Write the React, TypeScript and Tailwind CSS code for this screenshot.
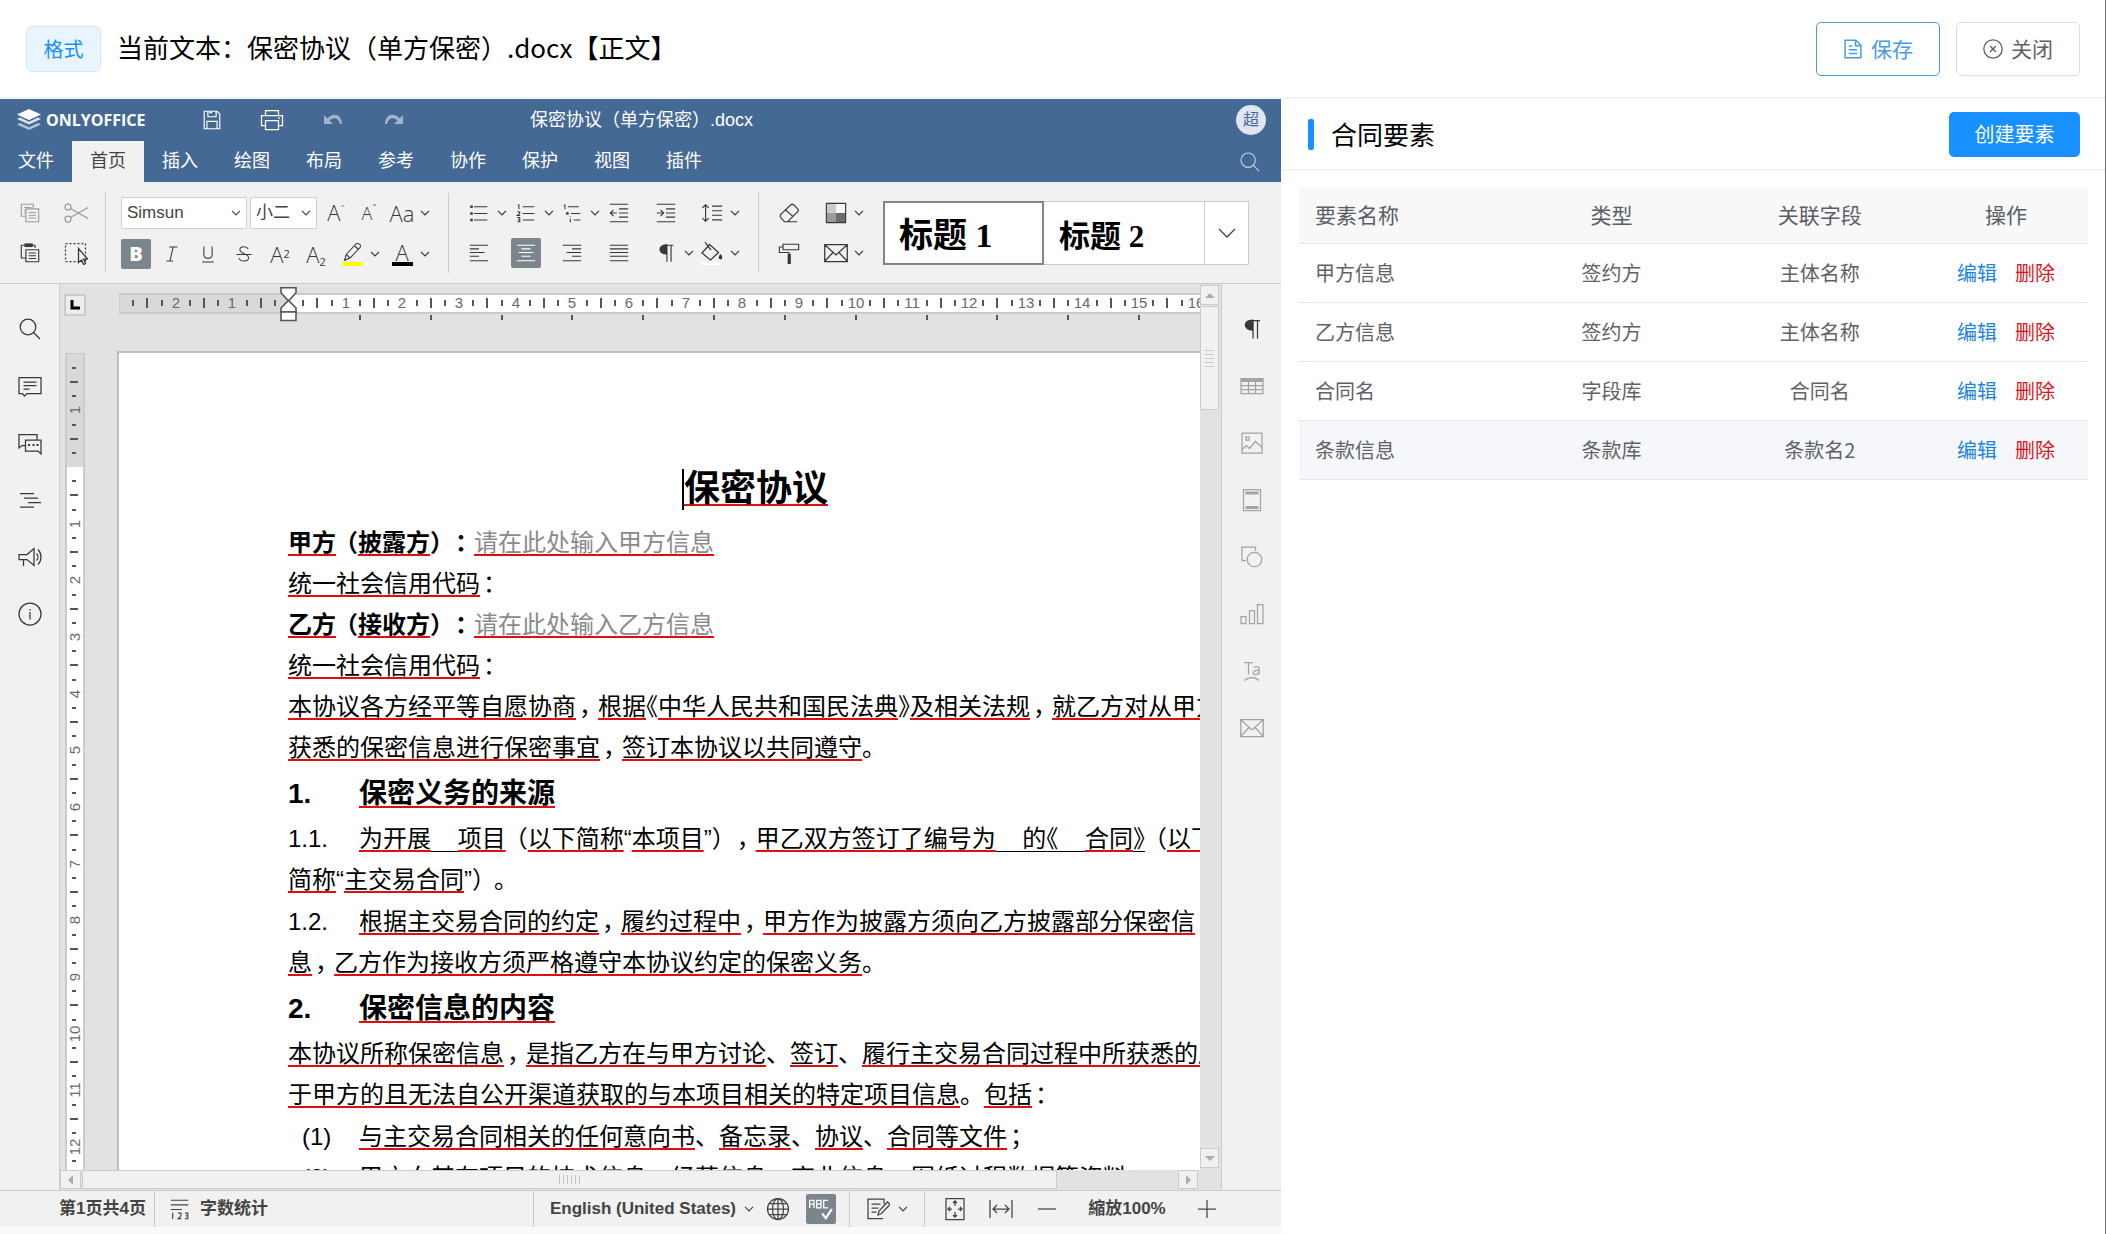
import type { ReactNode } from "react";
import clsx from "clsx";

const CM = 57;
const QUARTER = 85 / 6;

const tabs = ["文件", "首页", "插入", "绘图", "布局", "参考", "协作", "保护", "视图", "插件"];

const elements = [
  { name: "甲方信息", type: "签约方", field: "主体名称" },
  { name: "乙方信息", type: "签约方", field: "主体名称" },
  { name: "合同名", type: "字段库", field: "合同名" },
  { name: "条款信息", type: "条款库", field: "条款名2", active: true },
];

/* ---------- icons ---------- */

function Icon({
  children,
  size = 24,
  className,
}: {
  children: ReactNode;
  size?: number;
  className?: string;
}) {
  return (
    <svg
      viewBox="0 0 24 24"
      width={size}
      height={size}
      fill="none"
      stroke="currentColor"
      strokeWidth="1.25"
      className={clsx("shrink-0", className)}
      aria-hidden="true"
    >
      {children}
    </svg>
  );
}

function Chevron({ className }: { className?: string }) {
  return (
    <svg
      viewBox="0 0 10 6"
      width="10"
      height="6"
      fill="none"
      stroke="currentColor"
      strokeWidth="1.2"
      className={clsx("shrink-0", className)}
      aria-hidden="true"
    >
      <path d="M1 .8 5 5l4-4.200" />
    </svg>
  );
}

const icons = {
  save: <path d="M3.500 2.500h14l3 3v16h-17zM7.500 2.500v6h9v-6M9 4h3M6.500 21.500v-8h11v8" />,
  print: <path d="M5.500 7.500v-5h13v5M5.500 17.500h-4v-10h21v10h-4M5.500 12.500h13v9h-13zM18 10h2" />,
  undo: <path d="M3 7v9h9l-3.500-3.500c4-4 9-3 10.500 3.500h2C20.500 6 12 4 6.500 10.500z" fill="currentColor" stroke="none" />,
  redo: <path d="M21 7v9h-9l3.500-3.500c-4-4-9-3-10.500 3.500H3C3.500 6 12 4 17.500 10.500z" fill="currentColor" stroke="none" />,
  search: (
    <>
      <circle cx="10" cy="10" r="7.800" />
      <path d="m15.500 15.500 6.500 6.500" />
    </>
  ),
  copy: <path d="M7.500 15.500h-5v-13h13v4M5.500 6h8M5.500 9h2M5.500 12h2M7.500 7.500h14v14h-14zM10.500 11.500h8M10.500 14.500h8M10.500 17.500h8" />,
  cut: (
    <>
      <circle cx="4" cy="6" r="3" />
      <circle cx="4" cy="18" r="3" />
      <path d="M6.500 7.500 24 17.500M6.500 16.500 24 6.500" />
    </>
  ),
  paste: (
    <>
      <path d="M7.500 17.500h-5v-14h15v3M7.500 8.500h14v13h-14zM10.500 12h8M10.500 15h8M10.500 18h8" />
      <path d="M6 1.500h9v4H6z" fill="currentColor" stroke="none" />
    </>
  ),
  select: (
    <>
      <path d="M1.500 2.500h20v18h-20z" strokeDasharray="2 2" />
      <path d="M14.500 7.500v14l3-2.500 2 4.500 2-1-2-4.500h4z" fill="#f1f1f1" />
    </>
  ),
  italic: <path d="M8.500 3.500h10M5.500 20.500h8M13.500 3.500l-4 17" />,
  underline: <path d="M7 3v9c0 7 10 7 10 0V3M5 21.500h14" />,
  strike: <path d="M17 6c-2-4-10-3.500-10 1 0 5 10.500 4.500 10.500 9.500 0 5-9.500 5.500-11.500.500M3 12.500h18" />,
  bullets: (
    <>
      <path d="M6 4.500h16M6 12.500h16M6 20.500h16" />
      <path d="M1.500 3h3v3h-3zM1.500 11h3v3h-3zM1.500 19h3v3h-3z" fill="currentColor" stroke="none" />
    </>
  ),
  numbers: <path d="M8 4.500h14M8 12.500h14M8 20.500h14M2 2.500h1.500v5M1.500 10.500h3v2l-3 2.500h3.500M1.500 17.500h3v5h-3M2 20h2.500" />,
  multilevel: (
    <>
      <path d="M7 4.500h13M11 12.500h11M14 20.500h8M2 2.500h1.500v5M10 18.500v4.500M10 15.500v1" />
      <path d="M5 11h3v3H5z" fill="currentColor" stroke="none" />
    </>
  ),
  outdent: <path d="M2 2.500h20M12 7.500h10M12 12h10M12 16.500h10M2 21.500h20M9.500 12H2.500M6 8.500 2.500 12 6 15.500" />,
  indent: <path d="M2 2.500h20M12 7.500h10M12 12h10M12 16.500h10M2 21.500h20M2 12h7M6 8.500 9.500 12 6 15.500" />,
  spacing: <path d="M12 4.500h11M12 9.500h11M12 14.500h11M12 19.500h11M5 3v18M1.500 6.500 5 3l3.500 3.500M1.500 17.500 5 21l3.500-3.500" />,
  left: <path d="M2 3.500h20M2 7.500h10M2 11.500h16M2 15.500h10M2 20.500h20" />,
  center: <path d="M2 3.500h20M7 7.500h10M4 11.500h16M7 15.500h10M2 20.500h20" />,
  right: <path d="M2 3.500h20M12 7.500h10M6 11.500h16M12 15.500h10M2 20.500h20" />,
  justify: <path d="M2 3.500h20M2 7.500h20M2 11.500h20M2 15.500h20M2 20.500h20" />,
  pilcrow: (
    <>
      <path d="M11 3.500h9M13 3.500v18M17.500 3.500v18" />
      <path d="M12.500 3v10C3 13 3 3 12.500 3z" fill="currentColor" />
    </>
  ),
  fill: (
    <>
      <path d="m9.500 3.500 9 8-8 7.500-8.500-7zM5 1l6 8" />
      <path d="M20.500 14c4 5-4 5 0 0z" fill="currentColor" />
      <path d="M1 21h21v4H1z" fill="#fff" stroke="none" />
    </>
  ),
  eraser: <path d="M2.500 14 14 3c1-1 2-1 3 0l4.500 4.500c1 1 1 2 0 3L10.500 21.500H7L2.500 16.500zM8 8.500l8.500 7.500M9 21.500h12" />,
  palette: (
    <>
      <path d="M2 2h10v10H2z" fill="#cbcbcb" stroke="none" />
      <path d="M12 2h10v10H12z" fill="#f6f6f6" stroke="none" />
      <path d="M2 12h10v10H2z" fill="#9a9a9a" stroke="none" />
      <path d="M12 12h10v10H12z" fill="#6c6c6c" stroke="none" />
      <path d="M1.500 1.500h21v21h-21z" />
    </>
  ),
  roller: (
    <>
      <path d="M5.500 2.500h17v6h-17zM5.500 5.500h-4v6h10.500v2" />
      <path d="M10.500 13h3.500v11h-3.500z" fill="currentColor" stroke="none" />
    </>
  ),
  mail: <path d="M.700 3.500h22.600v17H.700zM1 4l11 10L23 4M1 20l8-8.500M23 20l-8-8.500" />,
  comment: <path d="M1 3.500h22v16H9l-2.500 2.500-2-2.500H1zM5.500 8h13M5.500 11.500h13M5.500 15h6" />,
  chat: (
    <>
      <path d="M7 14.500H4l-3 2.500V3.500h18v5M7.500 9h15.500v14l-3-3H7.500z" />
      <path d="M10 13h2v2h-2zM14.500 13h2v2h-2zM18.500 13h2v2h-2z" fill="currentColor" stroke="none" />
    </>
  ),
  headings: <path d="M2 5.500h14M6 10h14M10 14.500h13M2 19h14" />,
  speaker: <path d="M1 9.500h8l7-6v17l-7-6H1zM5.500 15v6M18.500 8.500c2 2 2 5 0 7M20 4.500c4 4 4 11 0 15" />,
  info: (
    <>
      <circle cx="12" cy="12" r="11" />
      <path d="M12 10v7.500M12 7v1.500" />
    </>
  ),
  table: (
    <>
      <path d="M1 4.500h22v15H1zM1 11.500h22M1 15.500h22M8.500 7v12M15.500 7v12" />
      <path d="M1 4h22v4H1z" fill="currentColor" stroke="none" />
    </>
  ),
  image: <path d="M2 2h20v20H2zM6 6h3v3H6zM2 18.500l4.500-4 3 3 6-7 6.500 6" />,
  frame: (
    <>
      <path d="M3.500 1.500h17v21h-17z" />
      <path d="M5.500 3.500h13v3h-13zM5.500 18h13v3h-13z" fill="currentColor" stroke="none" />
    </>
  ),
  shape: (
    <>
      <path d="M6 15.500H2V2h13.500v4" />
      <circle cx="14.500" cy="14.500" r="7.200" />
    </>
  ),
  chart: <path d="M1 14.500h5v7H1zM9.500 8.500h5v13h-5zM17.500 2.500H23v19h-5.500z" />,
  textart: <path d="M4 3.500h9M8.500 3.500v12M14 8.500c5-2 5 0 5 2v5M19 11c-7 0-7 5-3.500 4.500 2 0 3.500-1.500 3.500-2.500M4.500 21.500c4-4 11-4 14.500 0" />,
  count: <path d="M2 2.500h19M2 7.500h19M2 12.500h12M4 16v7M10 16.500h3v3l-3 3h3.500M17.500 16.500h3v6h-3M18 19.500h2.500" />,
  globe: (
    <>
      <circle cx="12" cy="12" r="10.500" />
      <path d="M12 1.500v21M1.500 12h21M3.500 6.500h17M3.500 17.500h17" />
      <ellipse cx="12" cy="12" rx="5.500" ry="10.500" />
    </>
  ),
  track: <path d="M17 21.500H2V2h16v5M5.500 7h9M5.500 11h7M5.500 15h5M12 18l1-4 8.500-9 2.500 2.500-8.500 9z" />,
  fitPage: <path d="M3 1.500h18v21H3zM12 4v5M12 15v5M10 6l2-2 2 2M10 18l2 2 2-2M5 12h4M15 12h4M7 10l-2 2 2 2M17 10l2 2-2 2" />,
  fitWidth: <path d="M1 3v18M23 3v18M4.500 12h15M8 8l-4 4 4 4M16 8l4 4-4 4" />,
  minus: <path d="M3 12h18" />,
  plus: <path d="M3 12h18M12 3v18" />,
};

/* ---------- toolbar pieces ---------- */

function Tool({
  label,
  children,
  menu,
  active,
  muted,
}: {
  label: string;
  children: ReactNode;
  menu?: boolean;
  active?: boolean;
  muted?: boolean;
}) {
  return (
    <button
      type="button"
      aria-label={label}
      className={clsx("flex h-[30px] items-center", muted ? "text-[#9c9c9c]" : "text-[#383838]")}
    >
      <span
        className={clsx(
          "flex h-[30px] w-[30px] items-center justify-center",
          active && "rounded-xs bg-[#7d858c] text-white",
        )}
      >
        {children}
      </span>
      {menu && (
        <span className="flex w-4 justify-center">
          <Chevron />
        </span>
      )}
    </button>
  );
}

function Letter({ children, mark }: { children: ReactNode; mark?: string }) {
  return (
    <span className="flex flex-col items-center font-['Open_Sans',sans-serif] text-[22px] leading-5 font-light">
      <span>{children}</span>
      {mark && <span className={clsx("h-1 w-[21px]", mark)} />}
    </span>
  );
}

function Combo({ label, value, className }: { label: string; value: string; className: string }) {
  return (
    <label className={clsx("relative flex h-8 items-center text-[#444]", className)}>
      <select
        aria-label={label}
        defaultValue={value}
        className="h-full w-full appearance-none rounded-xs border border-[#cfcfcf] bg-white pl-[5px] text-[17px]"
      >
        <option>{value}</option>
      </select>
      <Chevron className="pointer-events-none absolute right-[6px]" />
    </label>
  );
}

function Divider() {
  return <div className="-my-1 w-px shrink-0 bg-[#cbcbcb]" />;
}

function Toolbar() {
  return (
    <div className="flex h-[102px] shrink-0 items-start border-b border-[#cbcbcb] bg-[#f1f1f1] pt-[15px]">
      <div className="flex h-[72px]">
        <div className="grid w-[105px] grid-cols-[46px_auto] content-between py-px pl-[15px]">
          <Tool label="复制" muted>
            <Icon size={22}>{icons.copy}</Icon>
          </Tool>
          <Tool label="剪切" muted>
            <Icon>{icons.cut}</Icon>
          </Tool>
          <Tool label="粘贴">
            <Icon size={22}>{icons.paste}</Icon>
          </Tool>
          <Tool label="全选">
            <Icon>{icons.select}</Icon>
          </Tool>
        </div>
        <Divider />
        <div className="flex w-[342px] flex-col justify-between pl-[15px]">
          <div className="flex items-center">
            <Combo label="字体" value="Simsun" className="mr-[3px] w-[126px]" />
            <Combo label="字号" value="小二" className="mr-1 w-[67px]" />
            <div className="flex gap-[3px]">
              <Tool label="增大字号">
                <Letter>
                  A<sup className="text-xs">ˆ</sup>
                </Letter>
              </Tool>
              <Tool label="减小字号">
                <Letter>
                  <span className="text-lg">A</span>
                  <sup className="text-xs">ˇ</sup>
                </Letter>
              </Tool>
              <Tool label="更改大小写" menu>
                <Letter>Aa</Letter>
              </Tool>
            </div>
          </div>
          <div className="flex">
            <div className="flex gap-[6px]">
              <Tool label="粗体" active>
                <span className="font-['Open_Sans',sans-serif] text-xl font-extrabold">B</span>
              </Tool>
              <Tool label="斜体">
                <Icon size={20}>{icons.italic}</Icon>
              </Tool>
              <Tool label="下划线">
                <Icon size={20}>{icons.underline}</Icon>
              </Tool>
              <Tool label="删除线">
                <Icon size={20}>{icons.strike}</Icon>
              </Tool>
              <Tool label="上标">
                <Letter>
                  A<sup className="text-[11px] font-normal">2</sup>
                </Letter>
              </Tool>
              <Tool label="下标">
                <Letter>
                  A<sub className="text-[11px] font-normal">2</sub>
                </Letter>
              </Tool>
              <Tool label="突出显示颜色" menu>
                <span className="flex flex-col items-center">
                  <Icon size={20}>
                    <path d="m5 15 12-13c3-1 6 1 5 4L10 19l-7 3zM5 15l5 4M15 4.500 20 9" />
                  </Icon>
                  <span className="h-1 w-[21px] bg-[#ffff00]" />
                </span>
              </Tool>
            </div>
            <div className="ml-1">
              <Tool label="字体颜色" menu>
                <Letter mark="bg-black">A</Letter>
              </Tool>
            </div>
          </div>
        </div>
        <Divider />
        <div className="grid w-[309px] grid-cols-6 content-between py-px pr-[14px] pl-[15px]">
          <Tool label="项目符号" menu>
            <Icon size={20}>{icons.bullets}</Icon>
          </Tool>
          <Tool label="编号" menu>
            <Icon size={20}>{icons.numbers}</Icon>
          </Tool>
          <Tool label="多级列表" menu>
            <Icon size={20}>{icons.multilevel}</Icon>
          </Tool>
          <Tool label="减少缩进">
            <Icon size={22}>{icons.outdent}</Icon>
          </Tool>
          <Tool label="增加缩进">
            <Icon size={22}>{icons.indent}</Icon>
          </Tool>
          <Tool label="行间距" menu>
            <Icon size={22}>{icons.spacing}</Icon>
          </Tool>
          <Tool label="左对齐">
            <Icon size={22}>{icons.left}</Icon>
          </Tool>
          <Tool label="居中" active>
            <Icon size={22}>{icons.center}</Icon>
          </Tool>
          <Tool label="右对齐">
            <Icon size={22}>{icons.right}</Icon>
          </Tool>
          <Tool label="两端对齐">
            <Icon size={22}>{icons.justify}</Icon>
          </Tool>
          <Tool label="非打印字符" menu>
            <Icon size={22}>{icons.pilcrow}</Icon>
          </Tool>
          <Tool label="底纹" menu>
            <Icon>{icons.fill}</Icon>
          </Tool>
        </div>
        <Divider />
        <div className="grid w-[124px] grid-cols-[47px_auto] content-between py-px pl-[15px]">
          <Tool label="清除样式">
            <Icon size={22}>{icons.eraser}</Icon>
          </Tool>
          <Tool label="更改配色方案" menu>
            <Icon size={22}>{icons.palette}</Icon>
          </Tool>
          <Tool label="复制样式">
            <Icon size={22}>{icons.roller}</Icon>
          </Tool>
          <Tool label="邮件合并" menu>
            <Icon>{icons.mail}</Icon>
          </Tool>
        </div>
      </div>
      <div className="mt-1 flex h-16 border border-[#cbcbcb] bg-white font-['Liberation_Serif','Noto_Sans_CJK_SC',serif] font-bold text-black">
        <button type="button" className="-m-px w-[161px] border-2 border-[#848484] pt-1 pl-[14px] text-left text-[34px]">
          标题 1
        </button>
        <button type="button" className="w-[161px] pt-2 pl-4 text-left text-[31px]">
          标题 2
        </button>
        <button
          type="button"
          aria-label="更多样式"
          className="flex w-11 items-center justify-center border-l border-[#cbcbcb] text-[#444]"
        >
          <svg viewBox="0 0 18 10" width="18" height="10" fill="none" stroke="currentColor" strokeWidth="1.3">
            <path d="m1 1 8 8 8-8" />
          </svg>
        </button>
      </div>
    </div>
  );
}

/* ---------- rulers ---------- */

// zero sits 170px from the left end, the page margin
function HorizontalRuler() {
  const zero = 170;
  const marks = Array.from({ length: 78 }, (_, i) => i - 11).filter((q) => q !== 0);
  return (
    <svg width="1700" height="38" className="shrink-0" aria-hidden="true">
      <rect x="0" y="8" width="1700" height="21" fill="#cbcbcb" />
      <rect x="1" y="10" width="169" height="17" fill="#d9d9d9" />
      <rect x="170" y="10" width="1530" height="17" fill="#fff" />
      {marks.map((q) => {
        const x = Math.round(zero + q * QUARTER);
        if (q % 4 === 0) {
          return (
            <text key={q} x={x} y="23" fontSize="15" textAnchor="middle" fill="#6a6a6a">
              {Math.abs(q / 4)}
            </text>
          );
        }
        const tall = q % 2 === 0;
        return <rect key={q} x={x - 1} y={tall ? 13 : 15} width="2" height={tall ? 10 : 6} fill="#555" />;
      })}
      {Array.from({ length: 20 }, (_, i) => (
        <rect key={i} x={Math.round(zero + (i + 1) * QUARTER * 5) - 1} y="30" width="2" height="5" fill="#555" />
      ))}
      <g fill="#fff" stroke="#555" strokeWidth="1.6">
        <path d="M162 2.800h15v5L169.500 16 162 7.800z" />
        <path d="M162 27v-4l7.500-7.500L177 23v4z" />
        <path d="M162 27h15v8.500h-15z" />
      </g>
    </svg>
  );
}

function VerticalRuler() {
  const zero = 2 * CM;
  const marks = Array.from({ length: 58 }, (_, i) => i - 7).filter((q) => q !== 0);
  return (
    <svg width="20" height="900" className="mt-[2px] shrink-0" aria-hidden="true">
      <rect x="0" y="0" width="20" height="900" fill="#cbcbcb" />
      <rect x="2" y="1" width="16" height={zero - 1} fill="#d9d9d9" />
      <rect x="2" y={zero} width="16" height="900" fill="#fff" />
      {marks.map((q) => {
        const y = Math.round(zero + q * QUARTER);
        if (q % 4 === 0) {
          return (
            <text
              key={q}
              fontSize="15"
              textAnchor="middle"
              fill="#6a6a6a"
              transform={`translate(15 ${y}) rotate(-90)`}
            >
              {Math.abs(q / 4)}
            </text>
          );
        }
        const tall = q % 2 === 0;
        return <rect key={q} x={tall ? 5 : 7} y={y - 1} width={tall ? 8 : 4} height="2" fill="#555" />;
      })}
    </svg>
  );
}

/* ---------- document ---------- */

// run flagged by the spell checker
function Sp({ children, className }: { children: ReactNode; className?: string }) {
  return (
    <span
      className={clsx(
        "underline decoration-[#e00f0f] decoration-2 underline-offset-[3px] [text-decoration-skip-ink:none]",
        className,
      )}
    >
      {children}
    </span>
  );
}

// mid-sentence punctuation
function Pt({ children }: { children: ReactNode }) {
  return <span className="inline-block w-[22px] pl-[3px] [font-feature-settings:'halt']">{children}</span>;
}

function Open({ children }: { children: ReactNode }) {
  return <span className="inline-block w-[22px] text-right [font-feature-settings:'halt']">{children}</span>;
}

function Close({ children }: { children: ReactNode }) {
  return <span className="inline-block w-[22px] [font-feature-settings:'halt']">{children}</span>;
}

// book title marks take half a cell
function Mark({ children }: { children: ReactNode }) {
  return <span className="[font-feature-settings:'halt']">{children}</span>;
}

function Ul({ children }: { children: ReactNode }) {
  return (
    <span className="underline decoration-black decoration-1 underline-offset-[4px] [text-decoration-skip-ink:none]">
      {children}
    </span>
  );
}

function Blank() {
  return <Ul>{"\u00a0\u00a0\u00a0\u00a0"}</Ul>;
}

function Num({ children, className }: { children: ReactNode; className?: string }) {
  return <span className={clsx("inline-block w-[71px]", className)}>{children}</span>;
}

function Line({ children }: { children: ReactNode }) {
  return <div className="h-[41px]">{children}</div>;
}

function Heading({ children }: { children: ReactNode }) {
  return <h2 className="my-px h-[47px] text-[28px] leading-[47px] font-bold">{children}</h2>;
}

function Document() {
  return (
    <article className="h-full grow border-t-2 border-l-2 border-[#bfbfbf] bg-white pt-[105px] pl-[169px] font-['Liberation_Sans','Noto_Sans_CJK_SC',sans-serif] text-2xl leading-[41px] whitespace-nowrap text-black">
      <h1 className="mb-[2px] ml-[396px] flex h-[62px] items-center text-4xl font-bold">
        <span className="-ml-[2px] h-[41px] w-[2px] bg-black" />
        <Sp>保密协议</Sp>
      </h1>
      <Line>
        <b>
          <Sp>甲方</Sp>
          <Open>（</Open>
          <Sp>披露方</Sp>
          <Close>）</Close>
          <Pt>：</Pt>
        </b>
        <Sp className="text-[#8a8a8a]">请在此处输入甲方信息</Sp>
      </Line>
      <Line>
        <Sp>统一社会信用代码</Sp>
        <Pt>：</Pt>
      </Line>
      <Line>
        <b>
          <Sp>乙方</Sp>
          <Open>（</Open>
          <Sp>接收方</Sp>
          <Close>）</Close>
          <Pt>：</Pt>
        </b>
        <Sp className="text-[#8a8a8a]">请在此处输入乙方信息</Sp>
      </Line>
      <Line>
        <Sp>统一社会信用代码</Sp>
        <Pt>：</Pt>
      </Line>
      <div className="pb-px">
        <Line>
          <Sp>本协议各方经平等自愿协商</Sp>
          <Pt>，</Pt>
          <Sp>根据</Sp>
          <Mark>《</Mark>
          <Sp>中华人民共和国民法典</Sp>
          <Mark>》</Mark>
          <Sp>及相关法规</Sp>
          <Pt>，</Pt>
          <Sp>就乙方对从甲方</Sp>
        </Line>
        <Line>
          <Sp>获悉的保密信息进行保密事宜</Sp>
          <Pt>，</Pt>
          <Sp>签订本协议以共同遵守</Sp>。
        </Line>
      </div>
      <Heading>
        <Num>1.</Num>
        <Sp>保密义务的来源</Sp>
      </Heading>
      <div className="pb-px">
        <Line>
          <Num>1.1.</Num>
          <Sp>为开展</Sp>
          <Blank />
          <Sp>项目</Sp>
          <Open>（</Open>
          <Sp>以下简称</Sp>“<Sp>本项目</Sp>”<Close>）</Close>
          <Pt>，</Pt>
          <Sp>甲乙双方签订了编号为</Sp>
          <Blank />
          <Ul>
            的<Mark>《</Mark>
          </Ul>
          <Blank />
          <Sp>合同</Sp>
          <Ul>
            <Mark>》</Mark>
          </Ul>
          <Open>（</Open>
          <Sp>以下</Sp>
        </Line>
        <Line>
          <Sp>简称</Sp>“<Sp>主交易合同</Sp>”<Close>）</Close>。
        </Line>
      </div>
      <div className="pb-px">
        <Line>
          <Num>1.2.</Num>
          <Sp>根据主交易合同的约定</Sp>
          <Pt>，</Pt>
          <Sp>履约过程中</Sp>
          <Pt>，</Pt>
          <Sp>甲方作为披露方须向乙方披露部分保密信</Sp>
        </Line>
        <Line>
          <Sp>息</Sp>
          <Pt>，</Pt>
          <Sp>乙方作为接收方须严格遵守本协议约定的保密义务</Sp>。
        </Line>
      </div>
      <Heading>
        <Num>2.</Num>
        <Sp>保密信息的内容</Sp>
      </Heading>
      <div className="pb-px">
        <Line>
          <Sp>本协议所称保密信息</Sp>
          <Pt>，</Pt>
          <Sp>是指乙方在与甲方讨论</Sp>、<Sp>签订</Sp>、<Sp>履行主交易合同过程中所获悉的属</Sp>
        </Line>
        <Line>
          <Sp>于甲方的且无法自公开渠道获取的与本项目相关的特定项目信息</Sp>。<Sp>包括</Sp>
          <Pt>：</Pt>
        </Line>
      </div>
      <Line>
        <Num className="pl-[14px]">(1)</Num>
        <Sp>与主交易合同相关的任何意向书</Sp>、<Sp>备忘录</Sp>、<Sp>协议</Sp>、<Sp>合同等文件</Sp>
        <Pt>；</Pt>
      </Line>
      <Line>
        <Num className="pl-[14px]">(2)</Num>
        <Sp>甲方向其有项目的技术信息</Sp>、<Sp>经营信息</Sp>、<Sp>商业信息</Sp>、<Sp>图纸过程数据等资料</Sp>
      </Line>
    </article>
  );
}

/* ---------- scroll bars ---------- */

function Arrow({ d }: { d: string }) {
  return (
    <svg viewBox="0 0 10 10" width="10" height="10" fill="#adadad" aria-hidden="true">
      <path d={d} />
    </svg>
  );
}

const scrollBox = "flex shrink-0 items-center justify-center border border-[#cbcbcb] bg-[#f1f1f1]";

function VerticalScroll() {
  return (
    <div className="flex w-[21px] shrink-0 flex-col gap-px bg-[#e2e2e2] pt-px pr-[2px] pb-[2px]">
      <div className={clsx(scrollBox, "h-5")}>
        <Arrow d="M0 8 5 3l5 5z" />
      </div>
      <div className={clsx(scrollBox, "h-[104px] flex-col gap-[3px]")}>
        {[0, 1, 2, 3, 4].map((i) => (
          <span key={i} className="h-px w-[9px] bg-[#cbcbcb]" />
        ))}
      </div>
      <div className="grow" />
      <div className={clsx(scrollBox, "h-5")}>
        <Arrow d="M0 3l5 5 5-5z" />
      </div>
    </div>
  );
}

function HorizontalScroll() {
  return (
    <div className="flex h-5 shrink-0 gap-px bg-[#e2e2e2] pr-[23px] pb-px">
      <div className={clsx(scrollBox, "w-[21px]")}>
        <Arrow d="M7 0 2 5l5 5z" />
      </div>
      <div className="flex grow">
        <div className={clsx(scrollBox, "w-[89%] gap-[3px]")}>
          {[0, 1, 2, 3, 4, 5].map((i) => (
            <span key={i} className="h-[9px] w-px bg-[#c4c4c4]" />
          ))}
        </div>
      </div>
      <div className={clsx(scrollBox, "w-5")}>
        <Arrow d="M3 0l5 5-5 5z" />
      </div>
    </div>
  );
}

/* ---------- editor ---------- */

function SideRail({ items, dim, className }: { items: [string, ReactNode][]; dim?: boolean; className: string }) {
  return (
    <nav className={clsx("flex w-[60px] shrink-0 flex-col items-center gap-[33px] bg-[#f1f1f1] pt-[33px]", className)}>
      {items.map(([label, icon], i) => (
        <button
          key={label}
          type="button"
          aria-label={label}
          className={dim && i > 0 ? "text-[#a3a3a3]" : "text-[#383838]"}
        >
          <Icon>{icon}</Icon>
        </button>
      ))}
    </nav>
  );
}

function StatusBar() {
  return (
    <div className="flex h-9 shrink-0 items-center bg-[#f1f1f1] text-[17px] font-bold text-[#444]">
      <span className="w-[154px] shrink-0 pl-[59px]">第1页共4页</span>
      <button type="button" className="flex h-full grow items-center gap-[9px] border-l border-[#cbcbcb] pl-[14px]">
        <Icon size={22}>{icons.count}</Icon>
        字数统计
      </button>
      <div className="flex h-full items-center border-l border-[#cbcbcb] pr-[13px] pl-4">
        <button type="button" className="flex items-center gap-2">
          English (United States)
          <Chevron />
        </button>
        <button type="button" aria-label="设置文档语言" className="ml-3">
          <Icon>{icons.globe}</Icon>
        </button>
        <button
          type="button"
          aria-label="拼写检查"
          className="ml-4 flex h-[30px] w-[30px] items-center justify-center rounded-xs bg-[#7d858c] text-white"
        >
          <Icon size={26}>
            <path
              d="M1.500 11V4h4v7M1.500 7.500h4M8 4v7h4V4zM8 7.500h4M18.500 4h-4v7h4"
              strokeWidth="1.200"
            />
            <path d="m13 16 3.500 4.500L22 12" strokeWidth="2" />
          </Icon>
        </button>
      </div>
      <button type="button" aria-label="跟踪更改" className="flex h-full w-[75px] items-center justify-center gap-2 border-l border-[#cbcbcb]">
        <Icon>{icons.track}</Icon>
        <Chevron />
      </button>
      <div className="flex h-full w-[357px] items-center border-l border-[#cbcbcb] pl-[18px]">
        <button type="button" aria-label="适合页面">
          <Icon>{icons.fitPage}</Icon>
        </button>
        <button type="button" aria-label="适合宽度" className="ml-[22px]">
          <Icon>{icons.fitWidth}</Icon>
        </button>
        <button type="button" aria-label="缩小" className="ml-[22px]">
          <Icon>{icons.minus}</Icon>
        </button>
        <span className="w-[136px] text-center">縮放100%</span>
        <button type="button" aria-label="放大">
          <Icon>{icons.plus}</Icon>
        </button>
      </div>
    </div>
  );
}

function Editor() {
  return (
    <section className="flex min-w-0 flex-1 flex-col overflow-hidden bg-[#fafafa] pb-[7px] font-['Liberation_Sans','Noto_Sans_CJK_SC',sans-serif]">
      <header className="flex h-[83px] shrink-0 flex-col bg-[#446995] text-lg text-white">
        <div className="grid h-[42px] grid-cols-[1fr_auto_1fr] items-center pr-[15px] pl-[17px]">
          <div className="flex items-center">
            <svg viewBox="0 0 24 22" width="24" height="22" fill="#fff" aria-hidden="true">
              <path d="M12 0 24 5.500 12 11 0 5.500z" />
              <path d="m0 10 3-1.400 9 4.200 9-4.200 3 1.400-12 5.500z" opacity=".8" />
              <path d="m0 15.500 3-1.400 9 4.200 9-4.200 3 1.400-12 5.500z" opacity=".6" />
            </svg>
            <span className="ml-[5px] w-[155px] font-['Open_Sans',sans-serif] text-base font-bold">ONLYOFFICE</span>
            <div className="flex gap-[37px]">
              <button type="button" aria-label="保存文档">
                <Icon size={22}>{icons.save}</Icon>
              </button>
              <button type="button" aria-label="打印">
                <Icon>{icons.print}</Icon>
              </button>
              <button type="button" aria-label="撤销" className="opacity-50">
                <Icon>{icons.undo}</Icon>
              </button>
              <button type="button" aria-label="重做" className="opacity-50">
                <Icon>{icons.redo}</Icon>
              </button>
            </div>
          </div>
          <span>保密协议（单方保密）.docx</span>
          <span className="flex h-[30px] w-[30px] items-center justify-center justify-self-end rounded-full bg-[#dfe6ef] text-base text-[#446995]">
            超
          </span>
        </div>
        <div className="flex grow items-center pr-5">
          {tabs.map((tab) => (
            <button
              key={tab}
              type="button"
              className={clsx("h-full w-[72px] pb-px", tab === "首页" && "bg-[#f1f1f1] text-[#444]")}
            >
              {tab}
            </button>
          ))}
          <button type="button" aria-label="搜索功能" className="ml-auto opacity-70">
            <Icon size={22}>{icons.search}</Icon>
          </button>
        </div>
      </header>

      <Toolbar />

      <div className="flex min-h-0 flex-1 border-b border-[#cbcbcb]">
        <SideRail
          className="border-r border-[#cbcbcb]"
          items={[
            ["查找", icons.search],
            ["批注", icons.comment],
            ["聊天", icons.chat],
            ["标题", icons.headings],
            ["反馈和支持", icons.speaker],
            ["关于", icons.info],
          ]}
        />
        <div className="flex min-w-0 flex-1 flex-col">
          <div className="flex min-h-0 flex-1">
            <div className="flex min-w-0 flex-1 flex-col overflow-hidden bg-[#e2e2e2]">
              <div className="flex h-[67px] shrink-0 pt-px pl-1">
                <div className="mt-[9px] mr-[33px] flex h-[22px] w-[22px] shrink-0 items-center justify-center border-2 border-[#cbcbcb] bg-[#ededed]">
                  <svg width="10" height="10" stroke="#000" strokeWidth="3" fill="none" aria-hidden="true">
                    <path d="M2 0v8h8" />
                  </svg>
                </div>
                <HorizontalRuler />
              </div>
              <div className="flex min-h-0 flex-1 gap-8 overflow-hidden pl-[5px]">
                <VerticalRuler />
                <Document />
              </div>
            </div>
            <VerticalScroll />
          </div>
          <HorizontalScroll />
        </div>
        <SideRail
          dim
          className="border-l border-[#cbcbcb]"
          items={[
            ["段落设置", icons.pilcrow],
            ["表格设置", icons.table],
            ["图像设置", icons.image],
            ["页眉和页脚设置", icons.frame],
            ["形状设置", icons.shape],
            ["图表设置", icons.chart],
            ["艺术字设置", icons.textart],
            ["邮件合并设置", icons.mail],
          ]}
        />
      </div>

      <StatusBar />
    </section>
  );
}

/* ---------- right panel ---------- */

function ElementsPanel() {
  return (
    <aside className="w-[824px] shrink-0">
      <div className="flex h-[72px] items-center border-b-2 border-[#f3f3f3] pr-[25px] pl-[27px]">
        <span className="h-[31px] w-[6px] rounded-xs bg-[#1890ff]" />
        <h2 className="ml-[17px] text-[26px] leading-9 text-black">合同要素</h2>
        <button type="button" className="ml-auto h-[45px] w-[131px] rounded-[5px] bg-[#1890ff] text-xl text-white">
          创建要素
        </button>
      </div>
      <table className="mt-4 ml-[18px] w-[789px] table-fixed border-collapse text-center text-xl text-[#606266]">
        <thead>
          <tr className="h-14 border-b border-[#e4e7ed] bg-[#f8f8f9] text-[21px] text-[#5a5e66]">
            <th className="pl-4 text-left font-normal">要素名称</th>
            <th className="font-normal">类型</th>
            <th className="font-normal">关联字段</th>
            <th className="w-[164px] font-normal">操作</th>
          </tr>
        </thead>
        <tbody>
          {elements.map((row) => (
            <tr key={row.name} className={clsx("h-[59px] border-b border-[#e4e7ed]", row.active && "bg-[#f5f7fa]")}>
              <td className="pl-4 text-left">{row.name}</td>
              <td>{row.type}</td>
              <td>{row.field}</td>
              <td>
                <a href="#edit" className="text-[#1c84e0]">
                  编辑
                </a>
                <a href="#delete" className="ml-[18px] text-[#d9161c]">
                  删除
                </a>
              </td>
            </tr>
          ))}
        </tbody>
      </table>
    </aside>
  );
}

export default function App() {
  return (
    <div className="flex h-screen flex-col border-r border-[#6f7378] bg-white font-['Noto_Sans_CJK_SC',sans-serif]">
      <div className="flex h-[99px] shrink-0 items-center border-b-2 border-[#f3f3f3] pr-[25px] pl-[26px]">
        <span className="flex h-[46px] w-[75px] items-center justify-center rounded-md border border-[#d1e9ff] bg-[#e8f4ff] text-xl text-[#1890ff]">
          格式
        </span>
        <h1 className="ml-4 pb-[5px] text-[26px] text-black">当前文本：保密协议（单方保密）.docx【正文】</h1>
        <div className="ml-auto flex gap-4 text-[21px]">
          <button
            type="button"
            className="flex h-[54px] w-[124px] items-center justify-center gap-2 rounded-[5px] border border-[#4a9be0] text-[#4a9be0]"
          >
            <Icon size={20}>
              <path d="M2.500 1.500h13l6 6v15h-19zM15 2v6h6M7 8.500h4M7 13h10M7 17.500h10" strokeWidth="1.800" />
            </Icon>
            保存
          </button>
          <button
            type="button"
            className="flex h-[54px] w-[124px] items-center justify-center gap-2 rounded-[5px] border border-[#dcdfe6] text-[#606266]"
          >
            <Icon size={20}>
              <circle cx="12" cy="12" r="11" strokeWidth="1.600" />
              <path d="m8.500 8.500 7 7M15.500 8.500l-7 7" strokeWidth="1.800" />
            </Icon>
            关闭
          </button>
        </div>
      </div>
      <main className="flex min-h-0 flex-1">
        <Editor />
        <ElementsPanel />
      </main>
    </div>
  );
}
